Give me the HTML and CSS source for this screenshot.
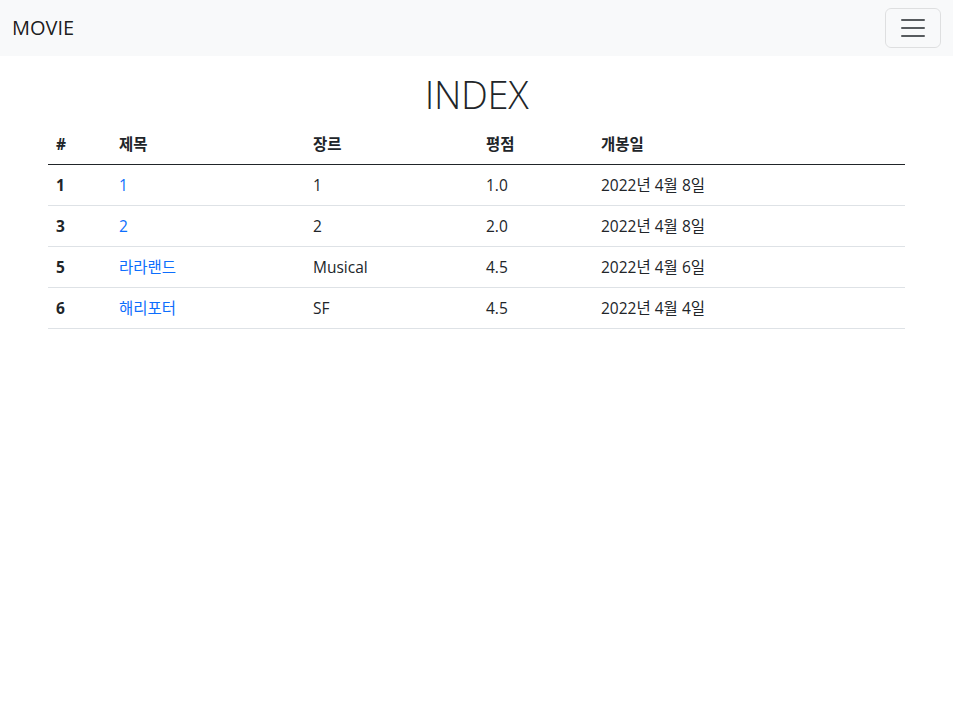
FILE: index.html
```html
<!DOCTYPE html>
<html lang="ko">
<head>
<meta charset="utf-8">
<title>MOVIE</title>
<link rel="stylesheet" href="styles.css">
</head>
<body>
<nav class="navbar">
  <a class="brand" href="#">MOVIE</a>
  <button class="toggler" type="button" aria-label="Toggle navigation">
    <svg width="30" height="30" viewBox="0 0 30 30" aria-hidden="true">
      <path d="M4 7h22M4 15h22M4 23h22" stroke="rgba(33,37,41,0.75)" stroke-width="2" stroke-linecap="round" fill="none"/>
    </svg>
  </button>
</nav>
<main class="content">
  <h1 class="title">INDEX</h1>
  <table class="table">
    <thead>
      <tr>
        <th class="c1">#</th>
        <th class="c2">제목</th>
        <th class="c3">장르</th>
        <th class="c4">평점</th>
        <th class="c5">개봉일</th>
      </tr>
    </thead>
    <tbody>
      <tr><th>1</th><td><a href="#">1</a></td><td>1</td><td>1.0</td><td>2022년 4월 8일</td></tr>
      <tr><th>3</th><td><a href="#">2</a></td><td>2</td><td>2.0</td><td>2022년 4월 8일</td></tr>
      <tr><th>5</th><td><a href="#">라라랜드</a></td><td>Musical</td><td>4.5</td><td>2022년 4월 6일</td></tr>
      <tr><th>6</th><td><a href="#">해리포터</a></td><td>SF</td><td>4.5</td><td>2022년 4월 4일</td></tr>
    </tbody>
  </table>
</main>
</body>
</html>
```
FILE: styles.css
```css
* { box-sizing: border-box; }
html, body { margin: 0; padding: 0; }
body {
  font-family: "Open Sans", "Noto Sans CJK KR", sans-serif;
  font-size: 16px;
  line-height: 1.5;
  color: #212529;
  background: #fff;
}
.navbar {
  display: flex;
  align-items: center;
  justify-content: space-between;
  height: 56px;
  padding: 8px 12px;
  background: #f8f9fa;
}
.brand {
  font-size: 20px;
  color: rgba(0,0,0,0.9);
  text-decoration: none;
  line-height: 30px;
}
.toggler {
  width: 56px;
  height: 40px;
  padding: 0;
  display: flex;
  align-items: center;
  justify-content: center;
  background: transparent;
  border: 1px solid rgba(0,0,0,0.1);
  border-radius: 6px;
}
.toggler svg { display: block; }
.content {
  padding: 0 48px;
}
.title {
  margin: 16px 0 8px;
  text-align: center;
  font-size: 38px;
  font-weight: 300;
  line-height: 44px;
  letter-spacing: -0.3px;
}
.table {
  width: 100%;
  border-collapse: collapse;
  table-layout: fixed;
}
.table th, .table td {
  padding: 8px;
  text-align: left;
  vertical-align: top;
  font-size: 15.5px;
  line-height: 24px;
  border-bottom: 1px solid #dee2e6;
}
.table thead th {
  font-weight: 700;
  border-bottom: 1px solid #212529;
}
.table tbody th { font-weight: 700; }
.table a { color: #0d6efd; text-decoration: none; }
.c1 { width: 63px; }
.c2 { width: 194px; }
.c3 { width: 173px; }
.c4 { width: 115px; }
```
